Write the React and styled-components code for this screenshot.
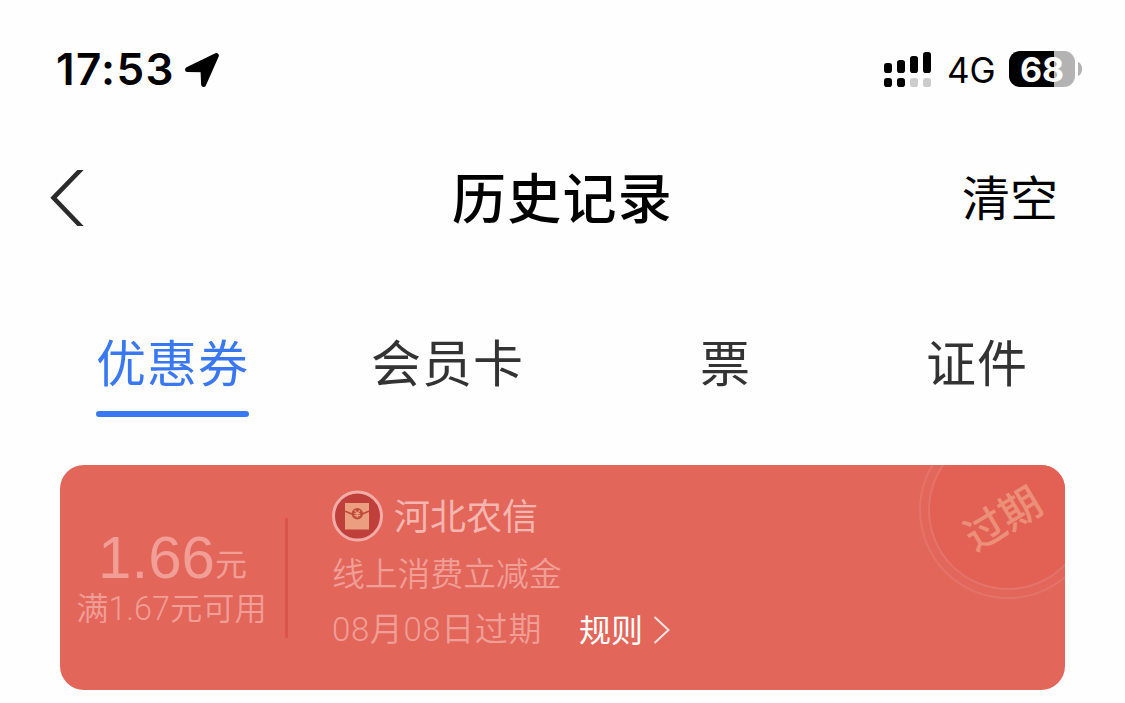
import React, { useState } from "react";
import styled, { createGlobalStyle } from "styled-components";

const tabs = ["优惠券", "会员卡", "票", "证件"];

function StatusBar() {
  return (
    <StStatus>
      <Clock>
        <span>17:53</span>
        <svg width="36" height="36" viewBox="0 0 36 36">
          <path
            d="M3.6 17.6 L32.4 3.6 L19.6 32.4 L19 17.8 Z"
            fill="#000"
            stroke="#000"
            strokeWidth="5"
            strokeLinejoin="round"
          />
        </svg>
      </Clock>
      <StatusRight>
        <svg width="48" height="37" viewBox="0 0 48 37">
          <rect x="0" y="12" width="8" height="10" rx="2.8" />
          <rect x="13" y="9" width="8" height="13" rx="2.8" />
          <rect x="26" y="5" width="8" height="17" rx="2.8" />
          <rect x="39" y="1" width="8" height="21" rx="2.8" />
          <rect x="0" y="27" width="8" height="9" rx="2.8" />
          <rect x="13" y="27" width="8" height="9" rx="2.8" />
          <rect x="26" y="27" width="8" height="9" rx="2.8" fill="#ccc" />
          <rect x="39" y="27" width="8" height="9" rx="2.8" fill="#ccc" />
        </svg>
        <Network>4G</Network>
        <Battery>68</Battery>
        <svg width="5" height="14" viewBox="0 0 5 14">
          <path d="M0 0 C5.5 2 5.5 12 0 14 Z" fill="#b3b3b3" />
        </svg>
      </StatusRight>
    </StStatus>
  );
}

function Coupon() {
  return (
    <StCoupon>
      <Amount>
        <Price>
          1.66<small>元</small>
        </Price>
        <Limit>满1.67元可用</Limit>
      </Amount>
      <Divider />
      <Info>
        <Shop>
          <svg width="52" height="52" viewBox="0 0 52 52">
            <circle cx="25.5" cy="26" r="24" fill="#bf3f3a" stroke="#f3aba6" strokeWidth="3" />
            <rect x="13" y="13" width="24" height="26.5" fill="#eb9f80" />
            <path
              d="M13 21.3 C16.5 22 19 25 25 25 C31 25 33.5 22 37 21.3"
              fill="none"
              stroke="#bf4a3c"
              strokeWidth="1.6"
            />
            <circle cx="25.3" cy="23.7" r="5.7" fill="#bf4a3c" />
            <path
              d="M22.7 20.3 L25.3 23.3 L27.9 20.3 M25.3 23.3 V27.7 M22.4 23.6 H28.2 M22.4 25.6 H28.2"
              fill="none"
              stroke="#eb9f80"
              strokeWidth="1.1"
            />
          </svg>
          <span>河北农信</span>
        </Shop>
        <Desc>线上消费立减金</Desc>
        <Bottom>
          <Expire>08月08日过期</Expire>
          <Rule>规则</Rule>
          <svg width="18" height="30" viewBox="0 0 18 30">
            <path d="M1.5 2 L15.5 15 L1.5 28" fill="none" stroke="#fbe3e0" strokeWidth="2" />
          </svg>
        </Bottom>
      </Info>
      <Stamp>
        <StampText>过期</StampText>
      </Stamp>
    </StCoupon>
  );
}

function App() {
  const [active, setActive] = useState(0);

  return (
    <StWrap>
      <GlobalStyle />
      <StatusBar />
      <Header>
        <BackBtn>
          <svg width="34" height="56" viewBox="0 0 34 56">
            <path d="M32 -1.5 L3.5 27.8 L32 57.5" fill="none" stroke="#2b2b2b" strokeWidth="4.6" />
          </svg>
        </BackBtn>
        <Title>历史记录</Title>
        <ClearBtn>清空</ClearBtn>
      </Header>
      <TabList>
        {tabs.map((tab, index) => (
          <Tab key={tab} $active={active === index} onClick={() => setActive(index)}>
            {tab}
          </Tab>
        ))}
      </TabList>
      <Coupon />
    </StWrap>
  );
}

export default App;

const GlobalStyle = createGlobalStyle`
  * {
    box-sizing: border-box;
  }
  body {
    margin: 0;
    background: #fefefe;
    font-family: "Noto Sans CJK SC", sans-serif;
  }
  button {
    padding: 0;
    border: none;
    background: none;
    font-family: inherit;
  }
  svg {
    display: block;
    flex-shrink: 0;
  }
`;

const StWrap = styled.div`
  width: 1125px;
  height: 703px;
  overflow: hidden;
`;

// StatusBar 컴포넌트
const StStatus = styled.div`
  display: flex;
  justify-content: space-between;
  height: 140px;
  padding: 50px 42px 0 56px;
  font-family: Inter, sans-serif;
`;

const Clock = styled.div`
  display: flex;
  height: 40px;
  align-items: center;
  gap: 9px;

  span {
    font-size: 44px;
    font-weight: 600;
    line-height: 39px;
    height: 40px;
    letter-spacing: 1.3px;
  }
`;

const StatusRight = styled.div`
  display: flex;
  height: 38px;
  align-items: center;
`;

const Network = styled.span`
  margin-left: 15px;
  width: 62px;
  font-size: 35px;
  height: 38px;
  line-height: 40px;
`;

const Battery = styled.div`
  width: 66px;
  height: 36px;
  margin-right: 3px;
  border-radius: 11px;
  background: linear-gradient(to right, #000 45px, #b3b3b3 45px);
  color: #fff;
  font-size: 34px;
  font-weight: 700;
  line-height: 37px;
  text-align: center;
`;

// Header 컴포넌트
const Header = styled.header`
  display: grid;
  grid-template-columns: 1fr auto 1fr;
  align-items: center;
  height: 116px;
  padding: 0 67px 0 50px;
`;

const BackBtn = styled.button`
  justify-self: start;
`;

const Title = styled.h1`
  margin: 0 0 5px 17px;
  font-size: 54px;
  font-weight: 500;
  line-height: 80px;
  letter-spacing: 1.2px;
`;

const ClearBtn = styled.button`
  justify-self: end;
  margin-bottom: 7px;
  font-size: 48px;
  line-height: 70px;
  color: #000;
`;

const TabList = styled.nav`
  display: grid;
  grid-template-columns: 275px 329px 226px auto;
  justify-content: start;
  justify-items: start;
  align-items: start;
  height: 209px;
  padding: 68px 0 0 96px;
`;

const Tab = styled.button`
  position: relative;
  height: 93px;
  padding-bottom: 20px;
  font-size: 50px;
  line-height: 73px;
  letter-spacing: 1px;
  color: ${(props) => (props.$active ? "#3a78f2" : "#333")};

  &::after {
    content: "";
    position: absolute;
    left: 0;
    right: 0;
    bottom: 0;
    height: 6px;
    border-radius: 3px;
    background: ${(props) => (props.$active ? "#3a78f2" : "transparent")};
  }
`;

// Coupon 컴포넌트
const StCoupon = styled.section`
  position: relative;
  display: flex;
  width: 1005px;
  height: 225px;
  margin-left: 60px;
  border-radius: 24px;
  overflow: hidden;
  background: #e2665a;
`;

const Amount = styled.div`
  width: 225px;
  padding-top: 62px;
  text-align: center;
  color: #f09e96;
`;

const Price = styled.div`
  height: 62px;
  font-family: "Liberation Sans", "Noto Sans CJK SC", sans-serif;
  font-size: 60px;
  line-height: 62px;
  white-space: nowrap;

  small {
    font-size: 32px;
    line-height: 1;
    vertical-align: 2px;
  }
`;

const Limit = styled.div`
  margin-left: -2px;
  font-family: Roboto, "Noto Sans CJK SC", sans-serif;
  font-size: 32.3px;
  font-weight: 350;
  line-height: 41px;
  white-space: nowrap;
`;

const Divider = styled.div`
  width: 3px;
  height: 120px;
  margin-top: 53px;
  background: #d9554c;
`;

const Info = styled.div`
  padding: 25px 0 0 44px;
`;

const Shop = styled.div`
  display: flex;
  align-items: center;
  gap: 10px;
  height: 52px;

  span {
    height: 52px;
    font-size: 36px;
    line-height: 48px;
    color: #f5b6b0;
  }
`;

const Desc = styled.div`
  margin-top: 6px;
  font-size: 32.8px;
  font-weight: 350;
  line-height: 48px;
  color: #f09e96;
`;

const Bottom = styled.div`
  display: flex;
  align-items: center;
  height: 48px;
  margin-top: 10px;
`;

const Expire = styled.span`
  width: 247px;
  height: 48px;
  font-family: Roboto, "Noto Sans CJK SC", sans-serif;
  font-size: 33px;
  font-weight: 350;
  line-height: 47px;
  letter-spacing: 0.6px;
  color: #f09e96;
`;

const Rule = styled.span`
  width: 74px;
  height: 48px;
  font-size: 32px;
  line-height: 44px;
  color: #fff;
`;

const Stamp = styled.div`
  position: absolute;
  top: -44px;
  right: -32px;
  display: flex;
  align-items: center;
  justify-content: center;
  width: 178px;
  height: 178px;
  border: 2px solid #e4736a;
  border-radius: 50%;

  &::before {
    content: "";
    position: absolute;
    inset: 7px;
    border: 2px solid #e4736a;
    border-radius: 50%;
    background: #e36055;
  }
`;

const StampText = styled.span`
  position: relative;
  left: -7px;
  top: 6px;
  font-size: 41px;
  font-weight: 500;
  line-height: 50px;
  color: #eb8f78;
  transform: rotate(-31deg);
`;
